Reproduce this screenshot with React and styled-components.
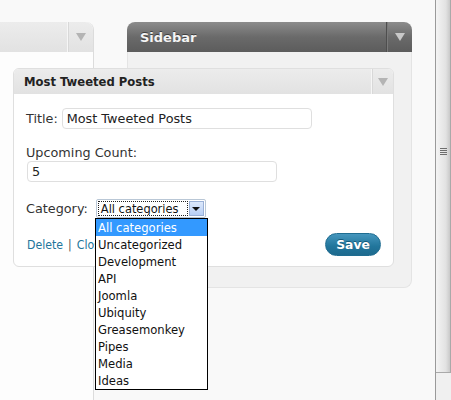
import React from 'react';
import styled, { createGlobalStyle } from 'styled-components';

const GlobalStyle = createGlobalStyle`
  html, body { margin: 0; padding: 0; }
  body {
    width: 451px;
    height: 400px;
    overflow: hidden;
    background: #f9f9f9;
    font-family: "DejaVu Sans", Verdana, sans-serif;
    font-size: 12.8px;
    color: #333;
  }
`;

const narrow = `"DejaVu Sans Condensed", "DejaVu Sans", sans-serif`;

const Screen = styled.div`
  display: flex;
  width: 451px;
  height: 400px;
`;

const Workspace = styled.div`
  position: relative;
  flex: 1;
  display: flex;
  align-items: flex-start;
  padding-top: 22px;
`;

const LeftPanel = styled.div`
  width: 93px;
  height: 378px;
  display: flex;
  flex-direction: column;
  background: #fdfdfd;
  border-right: 1px solid #dcdcdc;
  border-top-right-radius: 8px;
`;

const Header = styled.div`
  display: flex;
  align-items: stretch;
  height: ${p => p.h}px;
  flex-shrink: 0;
  border-radius: ${p => p.r}px ${p => p.r}px 0 0;
  background: ${p => (p.dark
    ? 'linear-gradient(#8c8c8c, #6a6a6a 50%, #5c5c5c)'
    : 'linear-gradient(#ececec, #e2e2e2)')};
  color: ${p => (p.dark ? '#f4f4f4' : '#222')};
  text-shadow: ${p => (p.dark ? '0 -1px 0 #3f3f3f' : 'none')};
  font-weight: bold;
  font-size: ${p => p.fs}px;
`;

const HeaderTitle = styled.div`
  flex: 1;
  display: flex;
  align-items: center;
  padding-left: ${p => p.pad}px;
  white-space: nowrap;
  overflow: hidden;
`;

const Toggle = styled.div`
  width: ${p => p.w}px;
  display: flex;
  align-items: center;
  justify-content: center;
  border-left: 1px solid ${p => (p.dark ? '#4e4e4e' : '#f6f6f6')};
  box-shadow: ${p => (p.dark ? 'inset 1px 0 0 #7a7a7a' : 'inset 1px 0 0 #d8d8d8')};
`;

const Arrow = styled.span`
  width: 0;
  height: 0;
  border-left: 5px solid transparent;
  border-right: 5px solid transparent;
  border-top: 8px solid ${p => (p.dark ? '#c8c8c8' : '#b4b4b4')};
`;

const SidebarPanel = styled.div`
  margin-left: 33px;
  width: 285px;
  display: flex;
  flex-direction: column;
`;

const SidebarBody = styled.div`
  height: 235px;
  background: #f1f1f1;
  border: 1px solid #e4e4e4;
  border-top: none;
  border-radius: 0 0 8px 8px;
`;

const Widget = styled.div`
  position: absolute;
  left: 13px;
  top: 68px;
  width: 381px;
  height: 199px;
  display: flex;
  flex-direction: column;
  background: #fff;
  border: 1px solid #dfdfdf;
  border-radius: 6px;
  box-sizing: border-box;
`;

const WidgetBody = styled.div`
  padding: 14px 12px 0 12px;
  display: flex;
  flex-direction: column;
`;

const FieldRow = styled.div`
  display: flex;
  align-items: center;
  gap: ${p => p.gap || 5}px;
  margin-top: ${p => p.mt || 0}px;
`;

const Label = styled.div`
  line-height: 16px;
  margin-top: ${p => p.mt || 0}px;
  color: #333;
`;

const TextInput = styled.div`
  width: ${p => p.w}px;
  height: 21px;
  margin-left: ${p => p.ml || 0}px;
  box-sizing: border-box;
  border: 1px solid #dfdfdf;
  border-radius: 4px;
  padding: 0 4px;
  display: flex;
  align-items: center;
  color: #222;
  background: #fff;
`;

const Select = styled.div`
  width: 110px;
  height: 19px;
  box-sizing: border-box;
  border: 1px solid #b9c7d6;
  border-radius: 2px;
  display: flex;
  align-items: stretch;
  padding: 1px;
  background: #fff;
  font-family: ${narrow};
  font-size: 12.7px;
`;

const SelectValue = styled.div`
  flex: 1;
  border: 1px dotted #222;
  display: flex;
  align-items: center;
  padding-left: 2px;
  color: #111;
  line-height: 13px;
  white-space: nowrap;
  overflow: hidden;
`;

const SelectButton = styled.div`
  width: 15px;
  margin-left: 1px;
  display: flex;
  align-items: center;
  justify-content: center;
  background: linear-gradient(#dce8fb, #b8cff5);
  border: 1px solid #9ab0d6;
  box-sizing: border-box;
`;

const TinyArrow = styled.span`
  width: 0;
  height: 0;
  border-left: 4px solid transparent;
  border-right: 4px solid transparent;
  border-top: 4px solid #111;
`;

const Actions = styled.div`
  display: flex;
  align-items: center;
  justify-content: space-between;
  margin-top: 15px;
`;

const Links = styled.div`
  color: #555;
  display: flex;
  gap: 5px;
  font-family: ${narrow};
  font-size: 12.2px;
  padding-left: 1px;
`;

const Link = styled.span`
  color: #21759b;
`;

const SaveButton = styled.div`
  width: 56px;
  height: 23px;
  border-radius: 12px;
  background: linear-gradient(#4596bd, #21759b 60%, #1e6a8e);
  border: 1px solid #1f6d91;
  box-sizing: border-box;
  color: #fff;
  font-weight: bold;
  font-size: 12.3px;
  display: flex;
  align-items: center;
  justify-content: center;
  text-shadow: 0 -1px 0 #155a7a;
`;

const Dropdown = styled.ul`
  position: absolute;
  left: 95px;
  top: 218px;
  width: 113px;
  margin: 0;
  padding: 0;
  list-style: none;
  background: #fff;
  border: 1px solid #000;
  box-sizing: border-box;
  font-family: ${narrow};
  font-size: 12.9px;
`;

const Option = styled.li`
  height: 17px;
  line-height: 17px;
  padding-left: 2px;
  white-space: nowrap;
  color: ${p => (p.active ? '#fff' : '#111')};
  background: ${p => (p.active ? '#3399ff' : 'transparent')};
`;

const Scrollbar = styled.div`
  width: 16px;
  display: flex;
  flex-direction: column;
  border-left: 1px solid #9a9a9a;
  box-sizing: border-box;
  background: #f0f0f0;
`;

const Thumb = styled.div`
  height: 372px;
  display: flex;
  align-items: center;
  justify-content: center;
  background: linear-gradient(90deg, #f4f4f4, #e2e2e2 70%, #c9c9c9);
  border-right: 1px solid #a9a9a9;
  border-bottom: 1px solid #a9a9a9;
`;

const Grip = styled.div`
  width: 7px;
  height: 7px;
  margin-top: -70px;
  background: repeating-linear-gradient(#6e6e6e 0 1px, transparent 1px 2px);
`;

const categories = [
  'All categories', 'Uncategorized', 'Development', 'API', 'Joomla',
  'Ubiquity', 'Greasemonkey', 'Pipes', 'Media', 'Ideas',
];

export default function App() {
  return (
    <Screen>
      <GlobalStyle />
      <Workspace>
        <LeftPanel>
          <Header h={30} r={0} fs={13} style={{ borderTopRightRadius: 8 }}>
            <HeaderTitle pad={10} />
            <Toggle w={25}><Arrow /></Toggle>
          </Header>
        </LeftPanel>

        <SidebarPanel>
          <Header dark h={30} r={8} fs={13}>
            <HeaderTitle pad={13}>Sidebar</HeaderTitle>
            <Toggle dark w={25}><Arrow dark /></Toggle>
          </Header>
          <SidebarBody />
        </SidebarPanel>

        <Widget>
          <Header h={25} r={5} fs={11.6}>
            <HeaderTitle pad={10}>Most Tweeted Posts</HeaderTitle>
            <Toggle w={21}><Arrow /></Toggle>
          </Header>
          <WidgetBody>
            <FieldRow gap={4}>
              <Label>Title:</Label>
              <TextInput w={250}>Most Tweeted Posts</TextInput>
            </FieldRow>
            <Label mt={16}>Upcoming Count:</Label>
            <TextInput w={250} ml={1}>5</TextInput>
            <FieldRow mt={17} gap={8}>
              <Label>Category:</Label>
              <Select>
                <SelectValue>All categories</SelectValue>
                <SelectButton><TinyArrow /></SelectButton>
              </Select>
            </FieldRow>
            <Actions>
              <Links>
                <Link>Delete</Link>
                <span>|</span>
                <Link>Close</Link>
              </Links>
              <SaveButton>Save</SaveButton>
            </Actions>
          </WidgetBody>
        </Widget>

        <Dropdown>
          {categories.map((c, i) => (
            <Option key={c} active={i === 0}>{c}</Option>
          ))}
        </Dropdown>
      </Workspace>
      <Scrollbar>
        <Thumb><Grip /></Thumb>
      </Scrollbar>
    </Screen>
  );
}
